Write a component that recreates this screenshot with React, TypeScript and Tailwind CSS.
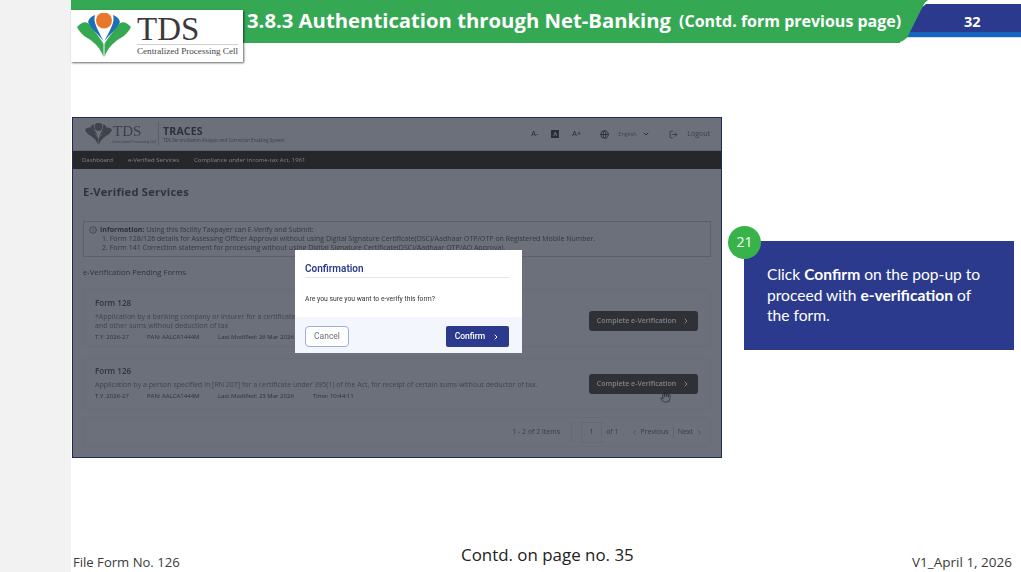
import React from "react";
import { ChevronRight, ChevronLeft, ChevronDown, Globe, LogOut, Info, Hand } from "lucide-react";

const Emblem = ({ w, h, mono }: { w: number; h: number; mono?: boolean }) => {
  const g = mono ? "#3f434b" : "#36a852";
  const b = mono ? "#3f434b" : "#1f6fb5";
  const o = mono ? "#3f434b" : "#e9772b";
  return (
    <svg width={w} height={h} viewBox="0 0 54 44" className="shrink-0">
      <path d="M0 14 C5 8 10 8 13 12 C18 19 24 26 26.5 31 L26.5 44 C24 36 18 30 12 26 C6 23 2 18 0 14Z" fill={g} />
      <path d="M54 14 C49 8 44 8 41 12 C36 19 30 26 27.5 31 L27.5 44 C30 36 36 30 42 26 C48 23 52 18 54 14Z" fill={g} />
      <path d="M11 9 C12 5 15 3 18 2 C16 9 20 15 26.5 28 C21 21 14 16 11 9Z" fill={b} />
      <path d="M43 9 C42 5 39 3 36 2 C38 9 34 15 27.5 28 C33 21 40 16 43 9Z" fill={b} />
      <circle cx="27" cy="7.5" r="8" fill={o} />
    </svg>
  );
};

const Meta = ({ items }: { items: [string, string][] }) => (
  <div className="flex text-[6px] leading-[9px] text-[#2e3239] mt-[3px]">
    {items.map(([t, c]) => (
      <span key={t} className={c}>{t}</span>
    ))}
  </div>
);

const CompleteButton = ({ top }: { top: string }) => (
  <button className={`${top} w-[109px] h-[20px] mr-[1px] rounded-[3px] bg-[#2f3137] flex items-center justify-center gap-[6px] text-[7px] font-semibold text-[#80848c]`}>
    Complete e-Verification
    <ChevronRight size={8} strokeWidth={3} />
  </button>
);

export default function App() {
  return (
    <div className="relative w-[1021px] h-[572px] overflow-hidden flex bg-white font-['Open_Sans',sans-serif]">
      <div className="w-[71px] bg-[#f2f2f2] shrink-0" />
      <div className="flex-1 flex flex-col min-w-0">
        {/* header ribbon */}
        <div className="h-[43px] shrink-0 flex">
          <div className="relative z-10 w-[829px] h-[43px] bg-[#34a853] flex items-center pl-[176px] text-white whitespace-nowrap">
            <span className="text-[20.3px] font-bold leading-[38px] pb-[4px]">3.8.3 Authentication through Net-Banking</span>
            <span className="ml-[8px] text-[16px] font-bold leading-[38px] pb-[2px]">(Contd. form previous page)</span>
          </div>
          <div className="relative flex-1">
            <svg width="121" height="43" viewBox="0 0 121 43" className="absolute left-0 top-0">
              <path d="M6 37 L121 37 L121 38 L6 38Z" fill="#cfdcf2" />
              <path d="M6 32 L121 32 L121 37 L6 37Z" fill="#1565c0" />
              <path d="M6 32 L20 9 L26 4 L121 4 L121 32Z" fill="#2b3a8c" />
              <path d="M-1 0 L28 0 Q25 2 23 6 L8 36 Q5 41 -3 43Z" fill="#34a853" />
            </svg>
            <span className="absolute left-[64px] top-[12px] text-[14.5px] font-bold leading-[20px] text-white">32</span>
          </div>
        </div>

        {/* main */}
        <div className="flex-1 flex pt-[74px] pl-px">
          <div className="w-[650px] h-[341px] shrink-0 border border-[#1f2a55] bg-[#6b707a] overflow-hidden relative">
            <div className="blur-[0.6px] flex flex-col h-full">
              {/* app header */}
              <div className="h-[33px] flex items-center pl-[12px] pr-[11px] border-b border-[#5d6169] shrink-0">
                <Emblem w={27} h={22} mono />
                <div className="flex flex-col ml-[1px] w-[43px]">
                  <span className="font-['Liberation_Serif',serif] text-[15px] leading-[15px] text-[#3c4047]">TDS</span>
                  <span className="text-[3.5px] leading-[5px] text-[#3c4047] whitespace-nowrap -ml-[1px]">Centralized Processing Cell</span>
                </div>
                <div className="w-px h-[24px] bg-[#5a5e66] mr-[4px] ml-[2px]" />
                <div className="flex flex-col">
                  <span className="text-[10.5px] leading-[13px] font-bold tracking-[0.2px] text-[#2c3038]">TRACES</span>
                  <span className="text-[4.4px] leading-[5px] text-[#3c4047] whitespace-nowrap">TDS Reconciliation Analysis and Correction Enabling System</span>
                </div>
                <div className="ml-auto flex items-center text-[#2f3339]">
                  <span className="text-[7px] font-semibold w-[20px]">A-</span>
                  <span className="w-[8px] h-[8px] bg-[#2a2d33] text-[#6b707a] text-[6px] font-bold flex items-center justify-center mr-[13px]">A</span>
                  <span className="text-[7px] font-semibold w-[28px]">A+</span>
                  <Globe size={9} strokeWidth={2.5} className="mr-[9px]" />
                  <span className="text-[5.5px] w-[24px] text-[#41454d]">English</span>
                  <ChevronDown size={8} strokeWidth={3} className="mr-[19px]" />
                  <LogOut size={9} strokeWidth={2} className="mr-[9px]" />
                  <span className="text-[7px] text-[#3c4047]">Logout</span>
                </div>
              </div>
              {/* nav */}
              <div className="h-[18px] bg-[#25272b] flex items-center pl-[9px] gap-[15px] text-[6px] font-medium text-[#81858c] shrink-0">
                <span>Dashboard</span>
                <span>e-Verified Services</span>
                <span>Compliance under Income-tax Act, 1961</span>
              </div>
              {/* body */}
              <div className="flex-1 px-[10px] flex flex-col">
                <h1 className="text-[11.2px] leading-[16px] font-bold tracking-[0.2px] text-[#2f333a] mt-[15px]">E-Verified Services</h1>
                <div className="mt-[21px] h-[36px] border border-[#5c6068] px-[5px] pt-[3px] text-[7px] leading-[9px] text-[#34383f]">
                  <div className="flex items-center gap-[3px]">
                    <Info size={8} />
                    <span><b className="font-bold text-[#2c3037]">Information:</b> Using this facility Taxpayer can E-Verify and Submit:</span>
                  </div>
                  <div className="pl-[13px]">1. Form 128/126 details for Assessing Officer Approval without using Digital Signature Certificate(DSC)/Aadhaar OTP/OTP on Registered Mobile Number.</div>
                  <div className="pl-[13px]">2. Form 141 Correction statement for processing without using Digital Signature Certificate(DSC)/Aadhaar OTP/AO Approval.</div>
                </div>
                <div className="mt-[10px] text-[7.7px] leading-[11px] font-medium text-[#30343b]">e-Verification Pending Forms</div>
                {/* card 128 */}
                <div className="mt-[11px] h-[58px] border border-[#686c76] rounded-[3px] pl-[11px] pr-[11px] pt-[7px] flex items-start justify-between shrink-0">
                  <div className="w-[470px]">
                    <div className="text-[8px] leading-[11px] font-semibold text-[#2f333a]">Form 128</div>
                    <div className="mt-[4px] text-[7px] leading-[9px] text-[#41454c]">
                      <div className="whitespace-nowrap">*Application by a banking company or insurer for a certificate under 395(1) of the Act, for receipt of interest, dividend</div>
                      <div>and other sums without deduction of tax</div>
                    </div>
                    <Meta items={[["T.Y. 2026-27", "w-[52px]"], ["PAN: AALCA1444M", "w-[71px]"], ["Last Modified: 26 Mar 2026", "w-[95px]"]]} />
                  </div>
                  <CompleteButton top="mt-[14px]" />
                </div>
                {/* card 126 */}
                <div className="mt-[11px] h-[52px] border border-[#686c76] rounded-[3px] pl-[11px] pr-[11px] pt-[6px] flex items-start justify-between shrink-0">
                  <div className="w-[470px]">
                    <div className="text-[8px] leading-[11px] font-semibold text-[#2f333a]">Form 126</div>
                    <div className="mt-[4px] text-[7px] leading-[9px] text-[#41454c] whitespace-nowrap">Application by a person specified in [RN 207] for a certificate under 395(1) of the Act, for receipt of certain sums without deductor of tax.</div>
                    <Meta items={[["T.Y. 2026-27", "w-[52px]"], ["PAN: AALCA1444M", "w-[71px]"], ["Last Modified: 23 Mar 2026", "w-[95px]"], ["Time: 10:44:11", ""]]} />
                  </div>
                  <CompleteButton top="mt-[9px]" />
                </div>
                {/* pagination */}
                <div className="mt-[7px] h-[30px] border border-[#686c76] rounded-[3px] flex items-center justify-end pr-[7px] text-[7px] font-medium text-[#3a3e45] shrink-0">
                  <span>1 - 2 of 2 items</span>
                  <span className="w-[12px] h-[20px] border-r border-[#666a74] mr-[9px]" />
                  <span className="w-[21px] h-[21px] border border-[#666a74] rounded-[2px] flex items-center justify-center mr-[4px]">1</span>
                  <span>of 1</span>
                  <ChevronLeft size={7} className="ml-[12px] mr-[3px]" />
                  <span>Previous</span>
                  <span className="w-px h-[11px] bg-[#5f636b] mx-[4px]" />
                  <span>Next</span>
                  <ChevronRight size={7} className="ml-[3px]" />
                </div>
              </div>
            </div>

            {/* cursor */}
            <Hand size={11} strokeWidth={1.6} className="absolute left-[587px] top-[274px] text-[#25272b] blur-[0.3px]" />

            {/* modal */}
            <div className="absolute left-[222px] top-[132px] w-[227px] h-[103px] bg-white flex flex-col blur-[0.5px] font-['Roboto',sans-serif]">
              <div className="flex-1 px-[10px] pt-[12px]">
                <div className="text-[10px] leading-[13px] font-semibold text-[#2d3a8c] pb-[2px] mr-[3px] border-b border-[#e6e6e6] mb-[17px]">Confirmation</div>
                <div className="text-[6.8px] leading-[9px] text-[#33363c]">Are you sure you want to e-verify this form?</div>
              </div>
              <div className="h-[36px] bg-[#f3f6fc] pl-[10px] pr-[13px] pt-[3px] flex items-center justify-between">
                <button className="w-[44px] h-[21px] rounded-[4px] border border-[#9fb0d6] bg-white text-[8.5px] text-[#6b6f78]">Cancel</button>
                <button className="w-[63px] h-[21px] rounded-[2px] bg-[#2b3a8c] text-white text-[8.5px] font-medium flex items-center justify-center gap-[7px]">
                  Confirm
                  <ChevronRight size={8} strokeWidth={3} />
                </button>
              </div>
            </div>
          </div>

          {/* callout */}
          <div className="relative ml-[22px] mt-[124px] w-[270px] h-[109px] bg-[#2b3a8c] pl-[23px] pt-[23px] text-white font-['Lato',sans-serif] text-[15.6px] leading-[20.5px]">
            <div className="absolute -left-[16px] -top-[15px] w-[33px] h-[33px] rounded-full bg-[#37b34a] flex items-center justify-center text-[14px] font-['Open_Sans',sans-serif]">21</div>
            <p className="whitespace-nowrap">Click <b className="font-bold">Confirm</b> on the pop-up to<br />proceed with <b className="font-bold">e-verification</b> of<br />the form.</p>
          </div>
        </div>

        {/* footer */}
        <div className="h-[29px] shrink-0 flex items-start justify-between pl-[2px] pr-[9px] text-[#3a3a3a]">
          <span className="text-[13.1px] leading-[18px] mt-[10px]">File Form No. 126</span>
          <span className="text-[16.9px] leading-[20px] text-[#222] mt-[2px] ml-[3px]">Contd. on page no. 35</span>
          <span className="text-[13.5px] leading-[18px] mt-[10px]">V1_April 1, 2026</span>
        </div>
      </div>

      {/* logo overlay */}
      <div className="absolute left-[71px] top-[10px] w-[172px] h-[52px] bg-white shadow-[1px_1px_2px_rgba(0,0,0,0.6)] flex items-start pl-[6px] pt-[3px] z-20">
        <Emblem w={54} h={44} />
        <div className="ml-[6px] flex flex-col w-[101px]">
          <div className="font-['Liberation_Serif',serif] text-[33px] leading-[29px] text-[#3a3a3c] pt-[2px]">TDS</div>
          <div className="mt-[0px] border-t border-[#cfcfcf] pt-[1px] font-['Liberation_Serif',serif] text-[9.1px] leading-[11px] text-[#444] whitespace-nowrap">Centralized Processing Cell</div>
        </div>
      </div>
    </div>
  );
}
